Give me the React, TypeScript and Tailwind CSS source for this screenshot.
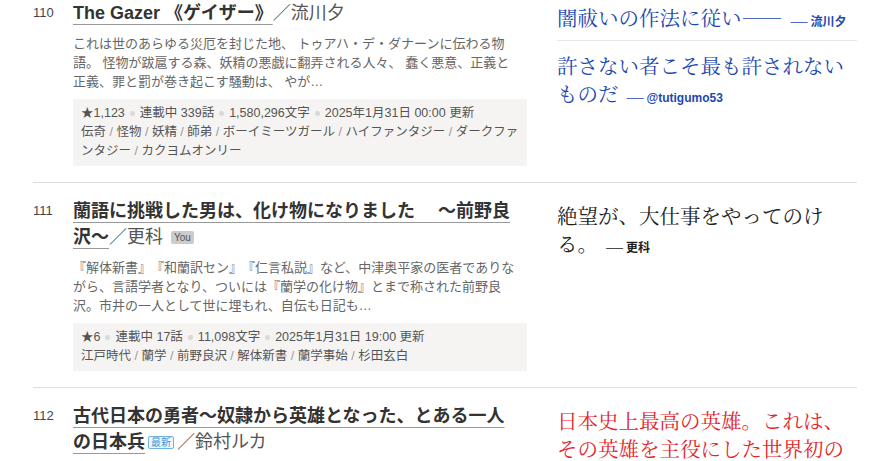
import React from "react";

interface Catch {
  text: string;
  by: string;
}

interface Work {
  rank: number;
  title: string;
  author: string;
  badge?: "you" | "new";
  intro: string;
  stars: string;
  episodes: string;
  chars: string;
  updated: string;
  tags: string[];
  tone: string;
  catches: Catch[];
}

const works: Work[] = [
  {
    rank: 110,
    title: "The Gazer 《ゲイザー》",
    author: "流川夕",
    intro:
      "これは世のあらゆる災厄を封じた地、 トゥアハ・デ・ダナーンに伝わる物語。 怪物が跋扈する森、妖精の悪戯に翻弄される人々、 蠢く悪意、正義と正義、罪と罰が巻き起こす騒動は、 やが…",
    stars: "1,123",
    episodes: "339話",
    chars: "1,580,296文字",
    updated: "2025年1月31日 00:00",
    tags: ["伝奇", "怪物", "妖精", "師弟", "ボーイミーツガール", "ハイファンタジー", "ダークファンタジー", "カクヨムオンリー"],
    tone: "text-[#1d48b0]",
    catches: [
      { text: "闇祓いの作法に従い――", by: "流川夕" },
      { text: "許さない者こそ最も許されないものだ", by: "@tutigumo53" },
    ],
  },
  {
    rank: 111,
    title: "蘭語に挑戦した男は、化け物になりました　 ～前野良沢～",
    author: "更科",
    badge: "you",
    intro:
      "『解体新書』『和蘭訳セン』『仁言私説』など、中津奥平家の医者でありながら、言語学者となり、ついには『蘭学の化け物』とまで称された前野良沢。市井の一人として世に埋もれ、自伝も日記も…",
    stars: "6",
    episodes: "17話",
    chars: "11,098文字",
    updated: "2025年1月31日 19:00",
    tags: ["江戸時代", "蘭学", "前野良沢", "解体新書", "蘭学事始", "杉田玄白"],
    tone: "text-[#222]",
    catches: [{ text: "絶望が、大仕事をやってのける。", by: "更科" }],
  },
  {
    rank: 112,
    title: "古代日本の勇者～奴隷から英雄となった、とある一人の日本兵",
    author: "鈴村ルカ",
    badge: "new",
    intro:
      "古代日本を舞台に、奴隷の身から身を起こし、やがて国を救う英雄となった一人の兵士の生涯を描く歴史ファンタジー。",
    stars: "48",
    episodes: "52話",
    chars: "203,114文字",
    updated: "2025年1月31日 18:00",
    tags: ["歴史", "古代日本", "英雄"],
    tone: "text-[#e3262b]",
    catches: [{ text: "日本史上最高の英雄。これは、その英雄を主役にした世界初の物語。", by: "鈴村ルカ" }],
  },
];

function Dot() {
  return <span className="mx-[5px] inline-block h-[5px] w-[5px] rounded-full bg-[#d9d9d9] align-middle" />;
}

function WorkRow({ work, first }: { work: Work; first: boolean }) {
  return (
    <div className={`flex border-b border-[#dddddd] pb-4 ${first ? "pt-0" : "pt-[15px]"}`}>
      <div className="w-10 shrink-0 text-[13px] leading-[26px] text-[#444]">{work.rank}</div>

      <div className="w-[454px] shrink-0">
        <h2 className="w-[448px] text-[18px] leading-[26px] text-[#333]">
          <a className="font-bold underline decoration-[#999] underline-offset-[5px]">{work.title}</a>
          {work.badge === "new" && (
            <span className="mx-[3px] rounded-[2px] border border-[#6db3e6] bg-[#eef7fd] px-[2px] align-[2px] text-[10px] leading-[14px] text-[#3c9ad8]">
              最新
            </span>
          )}
          <span className="text-[#555]">／{work.author}</span>
          {work.badge === "you" && (
            <span className="ml-[8px] rounded-[2px] bg-[#cccccc] px-[3px] py-[1px] align-[2px] text-[10px] leading-[14px] text-[#555]">
              You
            </span>
          )}
        </h2>

        <p className="mt-2 w-[446px] text-[13px] leading-[19px] text-[#666]">{work.intro}</p>

        <div className="mt-2 bg-[#f5f4f2] px-2 py-[5px] text-[12.5px] leading-[19px] text-[#555]">
          <div>
            ★{work.stars}
            <Dot />
            連載中 {work.episodes}
            <Dot />
            {work.chars}
            <Dot />
            {work.updated} 更新
          </div>
          <div>
            {work.tags.map((tag, i) => (
              <React.Fragment key={tag}>
                {i > 0 && <span className="text-[#999]"> / </span>}
                {tag}
              </React.Fragment>
            ))}
          </div>
        </div>
      </div>

      <div className={`ml-[30px] w-[300px] shrink-0 pt-[3px] ${work.tone}`}>
        {work.catches.map((c, i) => (
          <div
            key={i}
            className={`${i > 0 ? "border-t border-[#e8e8e8] pt-[10px]" : ""} pb-[9px]`}
          >
            <p className="font-['Noto_Serif_CJK_JP','Liberation_Serif','Noto_Sans_CJK_JP',serif] text-[20.5px] leading-[28px]">
              {c.text}
              <span className="ml-2 whitespace-nowrap font-['Liberation_Sans','Noto_Sans_CJK_JP',sans-serif] text-xs">
                ──<b className="ml-[3px] font-bold">{c.by}</b>
              </span>
            </p>
          </div>
        ))}
      </div>
    </div>
  );
}

export default function App() {
  return (
    <div className="h-[461px] w-[885px] overflow-hidden bg-white font-['Liberation_Sans','Noto_Sans_CJK_JP',sans-serif] [text-spacing-trim:space-all]">
      <div className="ml-[33px] w-[824px]">
        {works.map((w, i) => (
          <WorkRow key={w.rank} work={w} first={i === 0} />
        ))}
      </div>
    </div>
  );
}
